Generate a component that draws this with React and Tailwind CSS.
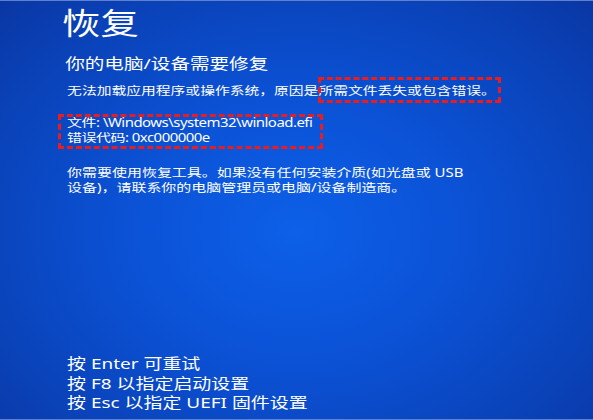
export default function App() {
  return (
    <div className="relative w-[593px] h-[420px] overflow-hidden bg-[radial-gradient(ellipse_at_50%_55%,#0d60e8_0%,#0b52d6_40%,#0a42b8_78%,#0a36a4_100%)] border-t border-b border-[#5f80cf] font-['Noto_Sans','Noto_Sans_CJK_SC',sans-serif] text-white">
      <div className="flex flex-col h-full pl-[62px] pb-[6px]">
        <div className="origin-top-left scale-x-[1.28] flex flex-col">
          <h1 className="mt-[7px] text-[30px] leading-[30px] font-normal">恢复</h1>
          <div className="pl-[2.5px] flex flex-col">
            <p className="mt-[18px] text-[15.3px] leading-[15px]">你的电脑/设备需要修复</p>
            <p className="pl-[1.5px] mt-[14px] text-[11.55px] leading-[11.7px]">无法加载应用程序或操作系统，原因是所需文件丢失或包含错误。</p>
            <p className="pl-[1.5px] mt-[20px] text-[11.7px] leading-[11.7px] tracking-[-0.4px]">文件: \Windows\system32\winload.efi</p>
            <p className="pl-[1.5px] mt-[3.5px] text-[11.7px] leading-[11.7px] tracking-[-0.4px]">错误代码: 0xc000000e</p>
            <p className="pl-[1.5px] mt-[21px] text-[11.7px] leading-[15px]">你需要使用恢复工具。如果没有任何安装介质(如光盘或 USB</p>
            <p className="pl-[1.5px] text-[11.7px] leading-[15px]">设备)，请联系你的电脑管理员或电脑/设备制造商。</p>
          </div>
        </div>
        <div className="mt-auto pl-[4px] origin-bottom-left scale-x-[1.28] flex flex-col text-[14.8px] leading-[19.7px]">
          <p>按 Enter 可重试</p>
          <p>按 F8 以指定启动设置</p>
          <p>按 Esc 以指定 UEFI 固件设置</p>
        </div>
      </div>
      <div className="absolute left-[318px] top-[76px] w-[183px] h-[26px] border-[3px] border-dashed border-[#ec1c1c]"></div>
      <div className="absolute left-[58px] top-[113px] w-[265px] h-[35px] border-[3px] border-dashed border-[#ec1c1c]"></div>
    </div>
  );
}
